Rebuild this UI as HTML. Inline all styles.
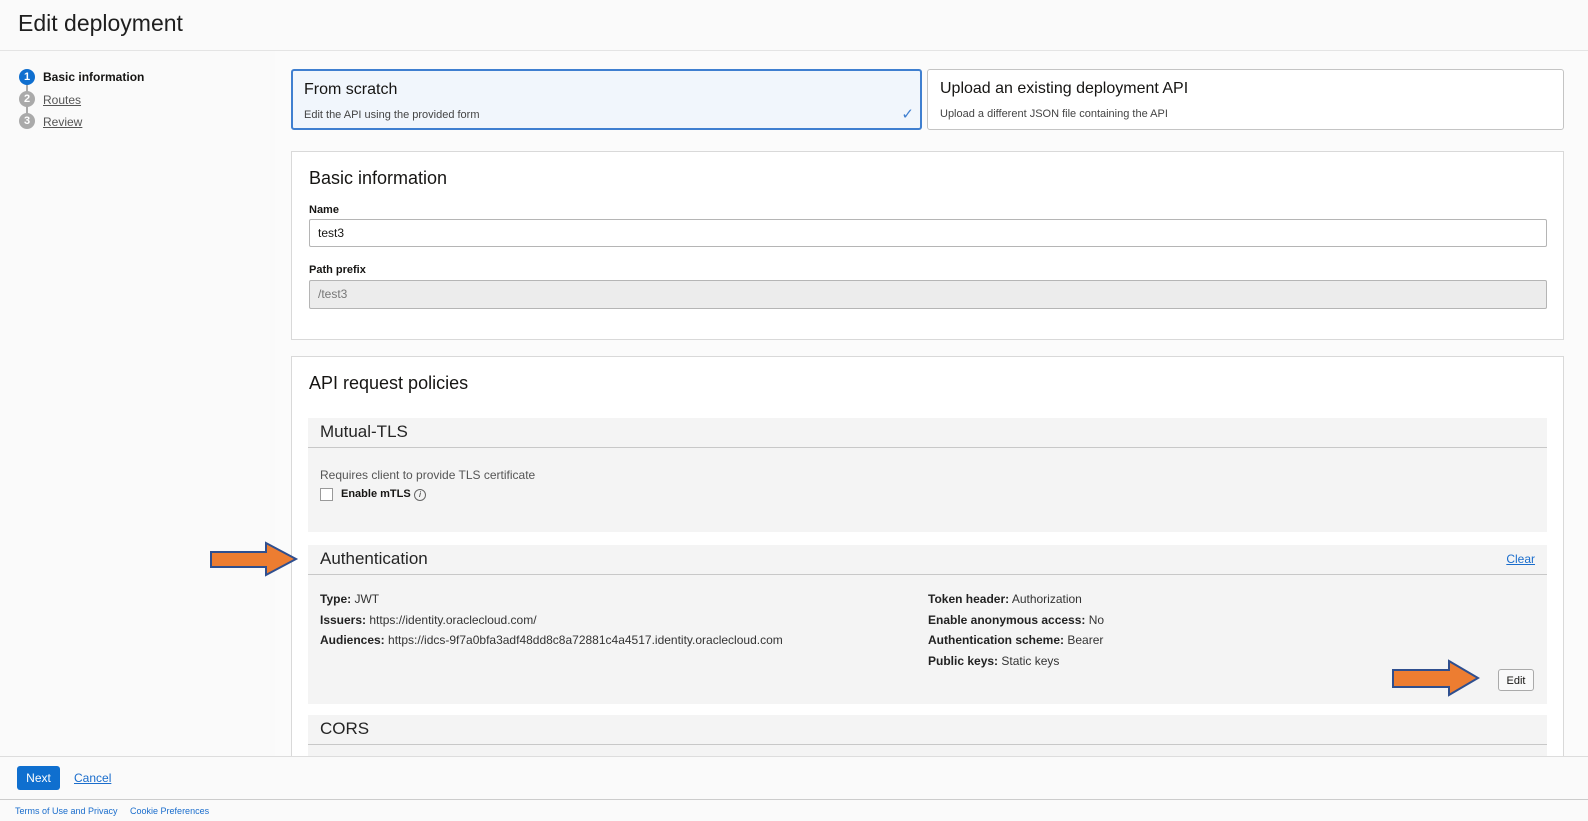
<!DOCTYPE html><html><head><style>
body{margin:0;width:1588px;height:821px;overflow:hidden;background:#fafafa;font-family:"Liberation Sans",Arial,sans-serif;color:#161513;position:relative}
.a{position:absolute}
.hdr{left:0;top:0;width:1588px;height:50px;background:#fafafa;border-bottom:1px solid #e4e4e4}
.card{background:#fff;border:1px solid #d9d9d9;box-sizing:border-box}
.lbl{font-size:11px;font-weight:bold}
.inp{border:1px solid #b5b5b5;border-radius:2px;box-sizing:border-box;font-size:12px;padding:0 8px;line-height:26px}
.sec{background:#f4f4f4}
.sh{border-bottom:1px solid #c8c8c8;font-size:17px;color:#252525;padding-left:12px;box-sizing:border-box}
.t{font-size:12px;color:#333}
.t b{color:#222}
a{color:#1a6dcc}
</style></head><body>
<div class="a hdr"><div class="a" style="left:18px;top:10px;font-size:23px;color:#1f1f1f">Edit deployment</div></div>
<div class="a" style="left:26px;top:84px;width:2px;height:40px;background:#aaa"></div>
<div class="a" style="left:19px;top:69px;width:16px;height:16px;border-radius:50%;background:#0f6fcf;color:#fff;font-size:11px;font-weight:bold;text-align:center;line-height:16px">1</div>
<div class="a" style="left:19px;top:91px;width:16px;height:16px;border-radius:50%;background:#aaa;color:#fff;font-size:11px;font-weight:bold;text-align:center;line-height:16px">2</div>
<div class="a" style="left:19px;top:113px;width:16px;height:16px;border-radius:50%;background:#aaa;color:#fff;font-size:11px;font-weight:bold;text-align:center;line-height:16px">3</div>
<div class="a" style="left:43px;top:70px;font-size:12px;font-weight:bold">Basic information</div>
<div class="a" style="left:43px;top:93px;font-size:12px;color:#555;text-decoration:underline">Routes</div>
<div class="a" style="left:43px;top:115px;font-size:12px;color:#555;text-decoration:underline">Review</div>

<div class="a" style="left:275px;top:51px;width:1313px;height:705px;background:#fbfbfb"></div>
<div class="a" style="left:291px;top:69px;width:631px;height:61px;border:2px solid #3f7fd0;border-radius:3px;background:#f1f6fc;box-sizing:border-box">
<div class="a" style="left:11px;top:10px;font-size:16px">From scratch</div>
<div class="a" style="left:11px;top:38px;font-size:11px;color:#444">Edit the API using the provided form</div>
<div class="a" style="right:6px;top:34px;color:#3f7fd0;font-size:15px">✓</div></div>
<div class="a card" style="left:927px;top:69px;width:637px;height:61px;border-color:#c4c4c4;border-radius:3px">
<div class="a" style="left:12px;top:10px;font-size:16px">Upload an existing deployment API</div>
<div class="a" style="left:12px;top:38px;font-size:11px;color:#444">Upload a different JSON file containing the API</div></div>

<div class="a card" style="left:291px;top:151px;width:1273px;height:189px">
<div class="a" style="left:17px;top:16px;font-size:18px">Basic information</div>
<div class="a lbl" style="left:17px;top:52px">Name</div>
<div class="a inp" style="left:17px;top:67px;width:1238px;height:28px">test3</div>
<div class="a lbl" style="left:17px;top:112px">Path prefix</div>
<div class="a inp" style="left:17px;top:128px;width:1238px;height:29px;background:#ececec;color:#777">/test3</div></div>

<div class="a card" style="left:291px;top:356px;width:1273px;height:420px;border-bottom:none">
<div class="a" style="left:17px;top:16px;font-size:18px">API request policies</div>
<div class="a sec" style="left:16px;top:61px;width:1239px;height:114px">
<div class="a sh" style="left:0;top:0;width:100%;height:30px;line-height:28px">Mutual-TLS</div>
<div class="a t" style="left:12px;top:50px;color:#555">Requires client to provide TLS certificate</div>
<div class="a" style="left:12px;top:70px;width:11px;height:11px;border:1px solid #999;background:#fff"></div>
<div class="a" style="left:33px;top:70px;font-size:11px;font-weight:bold">Enable mTLS</div>
<div class="a" style="left:106px;top:71px;width:10px;height:10px;border:1px solid #666;border-radius:50%;font-size:8px;text-align:center;line-height:10px;font-style:italic">i</div></div>
<div class="a sec" style="left:16px;top:188px;width:1239px;height:159px">
<div class="a sh" style="left:0;top:0;width:100%;height:30px;line-height:28px">Authentication</div>
<div class="a" style="right:12px;top:7px;font-size:12px;text-decoration:underline;color:#1a6dcc">Clear</div>
<div class="a t" style="left:12px;top:44px;line-height:20.5px"><b>Type:</b> JWT<br><b>Issuers:</b> https://identity.oraclecloud.com/<br><b>Audiences:</b> https://idcs-9f7a0bfa3adf48dd8c8a72881c4a4517.identity.oraclecloud.com</div>
<div class="a t" style="left:620px;top:44px;line-height:20.5px"><b>Token header:</b> Authorization<br><b>Enable anonymous access:</b> No<br><b>Authentication scheme:</b> Bearer<br><b>Public keys:</b> Static keys</div>
<div class="a" style="left:1190px;top:124px;width:36px;height:22px;border:1px solid #aaa;border-radius:3px;background:#f9f9f9;font-size:11px;text-align:center;line-height:22px;box-sizing:border-box">Edit</div></div>
<div class="a sec" style="left:16px;top:358px;width:1239px;height:60px">
<div class="a sh" style="left:0;top:0;width:100%;height:30px;line-height:28px">CORS</div></div></div>

<svg class="a" style="left:208px;top:540px" width="92" height="38"><polygon points="3,12 58,12 58,3 88,19 58,35 58,27 3,27" fill="#ed7d31" stroke="#2f4f8f" stroke-width="2"/></svg>
<svg class="a" style="left:1390px;top:658px" width="92" height="40"><polygon points="3,12 59,12 59,3 88,20 59,37 59,29 3,29" fill="#ed7d31" stroke="#2f4f8f" stroke-width="2"/></svg>

<div class="a" style="left:0;top:756px;width:1588px;height:42px;background:#fafafa;border-top:1px solid #ddd;border-bottom:1px solid #ccc">
<div class="a" style="left:17px;top:9px;width:43px;height:24px;background:#0f6fcf;border-radius:3px;color:#fff;font-size:12px;text-align:center;line-height:24px">Next</div>
<div class="a" style="left:74px;top:14px;font-size:12px;color:#1a6dcc;text-decoration:underline">Cancel</div></div>
<div class="a" style="left:15px;top:806px;font-size:9px;color:#1a6dcc">Terms of Use and Privacy &nbsp;&nbsp;&nbsp; Cookie Preferences</div>
</body></html>
